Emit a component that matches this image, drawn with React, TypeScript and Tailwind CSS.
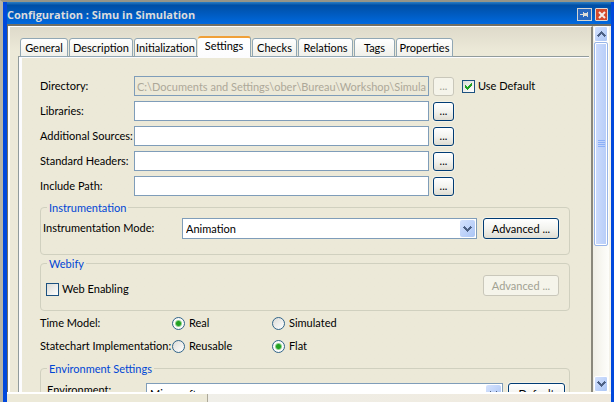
import { useState } from "react";
import type { ReactNode } from "react";

const tabs = [
  { name: "General", width: "w-[48px]" },
  { name: "Description", width: "w-[64px]" },
  { name: "Initialization", width: "w-[63px]" },
  { name: "Settings", width: "w-[53px]" },
  { name: "Checks", width: "w-[45px]" },
  { name: "Relations", width: "w-[55px]" },
  { name: "Tags", width: "w-[41px]" },
  { name: "Properties", width: "w-[57px]" },
];

const paths = [
  { id: "directory", label: "Directory:", locked: true, value: "C:\\Documents and Settings\\ober\\Bureau\\Workshop\\Simulat" },
  { id: "libraries", label: "Libraries:", locked: false, value: "" },
  { id: "sources", label: "Additional Sources:", locked: false, value: "" },
  { id: "headers", label: "Standard Headers:", locked: false, value: "" },
  { id: "include", label: "Include Path:", locked: false, value: "" },
];

function Chevron({ up = false }: { up?: boolean }) {
  return (
    <svg width="9" height="8" viewBox="0 0 9 8" shapeRendering="crispEdges" aria-hidden="true">
      <path
        d={up ? "M4 1h1v1h1v1h1v1h1v1h1v1H8v1H7V6H6V5H5V4H4v1H3v1H2v1H1V6H0V5h1V4h1V3h1V2h1z" : "M1 1h1v1h1v1h1v1h1V3h1V2h1V1h1v1h1v1H8v1H7v1H6v1H5v1H4V6H3V5H2V4H1V3H0V2h1z"}
        fill="#4d6185"
      />
    </svg>
  );
}

function PushButton({ children, disabled = false, className, label }: { children: ReactNode; disabled?: boolean; className: string; label?: string }) {
  return (
    <button
      type="button"
      disabled={disabled}
      aria-label={label}
      className={`shrink-0 rounded-[3px] border text-center ${
        disabled
          ? "border-[#c9c7ba] bg-[#f5f4ea] text-[#a1a192]"
          : "border-[#003c74] bg-linear-to-b from-white via-[#f3f3ef] to-[#dfddd3] text-black shadow-[0_0_0_1px_#f4f1e6]"
      } ${className}`}
    >
      {children}
    </button>
  );
}

function Combo({ id, options }: { id: string; options: string[] }) {
  return (
    <div className="relative h-[21px] min-w-0 flex-1">
      <select id={id} className="h-full w-full appearance-none border border-[#7f9db9] bg-white pl-[3px] pr-5 outline-none">
        {options.map((o) => (
          <option key={o}>{o}</option>
        ))}
      </select>
      <span className="pointer-events-none absolute inset-y-[2px] right-[2px] flex w-[15px] items-center justify-center rounded-[2px] bg-linear-to-br from-[#d5e2fd] to-[#aac5f5]">
        <Chevron />
      </span>
    </div>
  );
}

function Tick({ id, label, checked, onChange }: { id: string; label: string; checked: boolean; onChange: (v: boolean) => void }) {
  return (
    <label htmlFor={id} className="flex items-center gap-[3px]">
      <span className="relative block size-[13px]">
        <input
          id={id}
          type="checkbox"
          checked={checked}
          onChange={(e) => onChange(e.target.checked)}
          className="block size-[13px] appearance-none border border-[#1c5180] bg-linear-to-br from-[#dcdcd7] to-white"
        />
        {checked && (
          <svg className="pointer-events-none absolute inset-[3px]" width="7" height="7" viewBox="0 0 7 7" shapeRendering="crispEdges" aria-hidden="true">
            <path d="M0 2h1v1h1v1h1V3h1V2h1V1h1V0h1v3H6v1H5v1H4v1H3v1H2V6H1V5H0z" fill="#21a121" />
          </svg>
        )}
      </span>
      {label}
    </label>
  );
}

function Choice({ name, label, defaultChecked = false }: { name: string; label: string; defaultChecked?: boolean }) {
  return (
    <label className="flex w-[100px] items-center gap-1">
      <input
        type="radio"
        name={name}
        defaultChecked={defaultChecked}
        className="size-[13px] appearance-none rounded-full border border-[#2f6389] bg-linear-to-br from-[#dcdcd7] to-white checked:bg-[radial-gradient(circle,#21a121_0_2px,#8fd08f_3px,#fbfbf9_4px)]"
      />
      {label}
    </label>
  );
}

function Group({ title, children, className }: { title: string; children: ReactNode; className: string }) {
  return (
    <fieldset className="min-w-0 rounded-[4px] border border-[#d0d0bf]">
      <legend className="ml-[6px] h-[14px] px-[2px] leading-[16px] text-[#0046d5]">{title}</legend>
      <div className={`flex ${className}`}>{children}</div>
    </fieldset>
  );
}

export default function App() {
  const [active, setActive] = useState("Settings");
  const [useDefault, setUseDefault] = useState(true);
  const [web, setWeb] = useState(false);

  return (
    <div className="h-screen overflow-hidden border-l-[3px] border-t-2 border-l-[#b6b4a6] border-t-[#969588] font-['Lato','Liberation_Sans',sans-serif] text-[11px] leading-[14px] text-black">
      <div className="flex h-full flex-col border-l-[4px] border-r-[3px] border-[#0048dc]">
        <header className="flex h-[22px] shrink-0 items-center justify-between bg-linear-to-b from-[#2a7fc4] from-0% via-[#004fa5] via-15% to-[#0069df] pr-[3px] pt-[3px]">
          <h1 className="font-['Open_Sans','Noto_Sans',sans-serif] text-[11px] font-bold text-[#dcdcdc]">Configuration : Simu in Simulation</h1>
          <div className="flex gap-[3px]">
            <button type="button" aria-label="Pin" className="flex h-[13px] w-[15px] items-center justify-center border border-[#d5d5d0] bg-[#2868c0]">
              <svg width="9" height="7" viewBox="0 0 9 7" shapeRendering="crispEdges" aria-hidden="true">
                <path d="M0 3h3V1h1v1h3V1h1v5H7V5H4v1H3V4H0z" fill="#dcdcd8" />
              </svg>
            </button>
            <button type="button" aria-label="Close" className="flex size-[13px] items-center justify-center rounded-[1px] border border-[#e0d8d0] bg-[#d34a2c]">
              <svg width="8" height="8" viewBox="0 0 8 8" aria-hidden="true">
                <path d="M1 1l6 6M7 1L1 7" stroke="#f0ece8" strokeWidth="2" />
              </svg>
            </button>
          </div>
        </header>

        <div className="flex min-h-0 flex-1 border-l border-t-2 border-[#716f64]">
          <main className="min-w-0 flex-1 overflow-hidden border-l-2 border-t border-r-2 border-l-white border-t-white border-r-[#8a887c] bg-[#ece9d8] bg-linear-to-b from-[#dedaca] to-[#ece9d8] to-[24px] pl-2 pt-[9px]">
            <nav role="tablist" className="relative z-10 flex h-[21px] items-end gap-px pl-[2px]">
              {tabs.map((t) => (
                <button
                  key={t.name}
                  type="button"
                  role="tab"
                  aria-selected={t.name === active}
                  onClick={() => setActive(t.name)}
                  className={`shrink-0 rounded-t-[3px] whitespace-nowrap ${t.width} ${
                    t.name === active
                      ? "h-[21px] border-t-2 border-r border-t-[#f0a038] border-r-[#91a7b4] bg-linear-to-b from-white to-[#fcfcfe] pb-[3px]"
                      : "h-[19px] border border-[#91a7b4] bg-linear-to-b from-white to-[#f0f0ea]"
                  }`}
                >
                  {t.name}
                </button>
              ))}
            </nav>
            <section role="tabpanel" className="-mt-px mr-[2px] border-l border-t border-[#919b9c]">
              <form className="flex flex-col gap-1 border-l-[3px] border-t border-[#fcfcfe] pb-4 pl-[18px] pr-[19px] pt-[18px]">
                <div className="flex flex-col gap-[5px]">
                  {paths.map((p) => (
                    <div key={p.id} className="flex h-[20px] items-center">
                      <label htmlFor={p.id} className="w-[94px] shrink-0 whitespace-nowrap">
                        {p.label}
                      </label>
                      <input
                        id={p.id}
                        type="text"
                        defaultValue={p.value}
                        disabled={p.locked}
                        className="h-[20px] min-w-0 flex-1 border border-[#7f9db9] bg-white px-[2px] outline-none disabled:bg-[#ece9d8] disabled:text-[#aca899]"
                      />
                      <PushButton disabled={p.locked} label={`Browse ${p.label}`} className="ml-1 h-[19px] w-[21px]">
                        ...
                      </PushButton>
                      <div className="ml-2 w-[108px] shrink-0">
                        {p.locked && <Tick id="use-default" label="Use Default" checked={useDefault} onChange={setUseDefault} />}
                      </div>
                    </div>
                  ))}
                </div>

                <div className="flex flex-col gap-px">
                  <Group title="Instrumentation" className="pb-[15px] pl-[2px] pr-[10px] pt-1">
                    <label htmlFor="mode" className="w-[139px] shrink-0 pt-[3px]">
                      Instrumentation Mode:
                    </label>
                    <Combo id="mode" options={["Animation", "Tracing", "None"]} />
                    <PushButton className="ml-[6px] h-[21px] w-[76px]">Advanced ...</PushButton>
                  </Group>
                  <Group title="Webify" className="justify-between pb-[14px] pl-[5px] pr-[10px] pt-[5px]">
                    <div className="pt-[7px]">
                      <Tick id="web" label="Web Enabling" checked={web} onChange={setWeb} />
                    </div>
                    <PushButton disabled className="h-[21px] w-[76px]">
                      Advanced ...
                    </PushButton>
                  </Group>

                  <div className="flex h-[22px] items-center" role="radiogroup" aria-labelledby="time-model">
                    <span id="time-model" className="w-[132px]">
                      Time Model:
                    </span>
                    <Choice name="time" label="Real" defaultChecked />
                    <Choice name="time" label="Simulated" />
                  </div>
                  <div className="flex h-[22px] items-center" role="radiogroup" aria-labelledby="statechart">
                    <span id="statechart" className="w-[132px] whitespace-nowrap">
                      Statechart Implementation:
                    </span>
                    <Choice name="chart" label="Reusable" />
                    <Choice name="chart" label="Flat" defaultChecked />
                  </div>
                </div>

                <Group title="Environment Settings" className="pb-4 pl-[6px] pr-1 pt-2">
                  <label htmlFor="environment" className="w-[99px] shrink-0">
                    Environment:
                  </label>
                  <Combo id="environment" options={["Microsoft", "Cygwin", "Linux"]} />
                  <PushButton className="ml-[5px] h-[21px] w-[57px]">Default</PushButton>
                </Group>
              </form>
            </section>
          </main>

          <div className="flex w-[18px] shrink-0 flex-col border-r-2 border-[#f3f1e8] bg-linear-to-r from-[#f0efe6] to-[#fefefb] px-px">
            <button type="button" aria-label="Scroll up" className="flex h-4 shrink-0 items-center justify-center rounded-[2px] border border-white bg-linear-to-br from-[#d5e2fd] to-[#aac5f5]">
              <Chevron up />
            </button>
            <div className="flex min-h-0 flex-1 flex-col">
              <div className="flex h-[61%] flex-col items-center justify-center gap-px rounded-[2px] border border-[#98b5e8] bg-linear-to-r from-[#cddcfd] to-[#b7cdf8] shadow-[inset_0_0_0_1px_#fff]">
                <i className="h-px w-[7px] bg-[#8cb0f8]" />
                <i className="h-px w-[7px] bg-[#8cb0f8]" />
                <i className="h-px w-[7px] bg-[#8cb0f8]" />
                <i className="h-px w-[7px] bg-[#8cb0f8]" />
              </div>
            </div>
            <button type="button" aria-label="Scroll down" className="flex h-4 shrink-0 items-center justify-center rounded-[2px] border border-white bg-linear-to-br from-[#d5e2fd] to-[#aac5f5]">
              <Chevron />
            </button>
          </div>
        </div>

        <footer className="flex h-[10px] shrink-0 border-t-2 border-white bg-[#ece9d8]">
          <div className="w-[201px] border-r border-[#aca899]" />
          <div className="flex-1 bg-linear-to-r from-[#f0efe9] to-[#efe9dc]" />
        </footer>
      </div>
    </div>
  );
}
